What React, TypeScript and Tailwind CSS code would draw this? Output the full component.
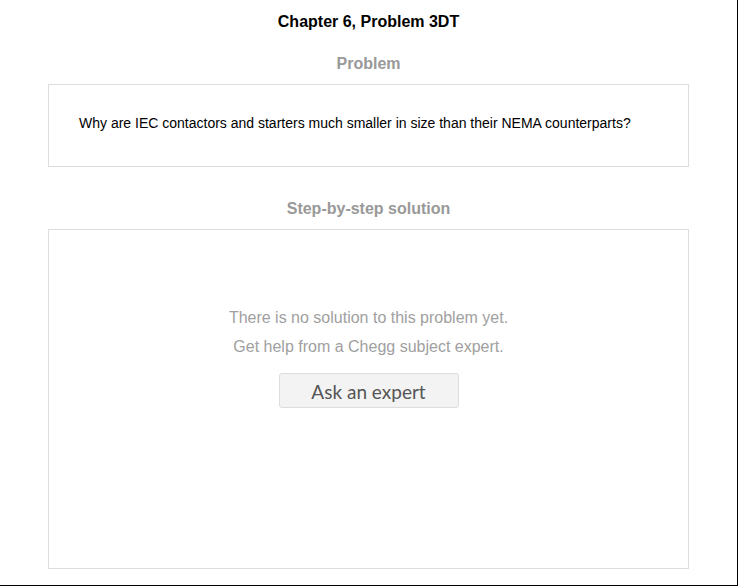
const App = () => {
  return (
    <div className="w-[738px] h-[586px] bg-white border-r border-b border-black font-['Liberation_Sans',Arial,sans-serif]">
      <div className="w-[737px] flex flex-col items-center">
        <h1 className="mt-[13px] text-[16px] leading-[18px] font-bold text-black">Chapter 6, Problem 3DT</h1>

        <h2 className="mt-[24px] text-[16px] leading-[18px] font-bold text-[#999]">Problem</h2>
        <div className="mt-[11px] w-[641px] h-[83px] border border-[#ddd] px-[30px] pt-[30px]">
          <p className="text-[14px] leading-[16px] text-black">
            Why are IEC contactors and starters much smaller in size than their NEMA counterparts?
          </p>
        </div>

        <h2 className="mt-[33px] text-[16px] leading-[18px] font-bold text-[#999]">Step-by-step solution</h2>
        <div className="mt-[11px] w-[641px] h-[340px] border border-[#ddd] flex flex-col items-center pt-[73px]">
          <p className="text-[16px] leading-[29px] text-[#a0a0a0]">There is no solution to this problem yet.</p>
          <p className="text-[16px] leading-[29px] text-[#a0a0a0]">Get help from a Chegg subject expert.</p>
          <button className="mt-[12px] w-[180px] h-[35px] bg-[#f3f3f3] border border-[#ddd] rounded-[3px] pt-[2px] text-[19px] leading-[22px] text-[#555] font-['Lato',sans-serif]">
            Ask an expert
          </button>
        </div>
      </div>
    </div>
  );
};

export default App;
